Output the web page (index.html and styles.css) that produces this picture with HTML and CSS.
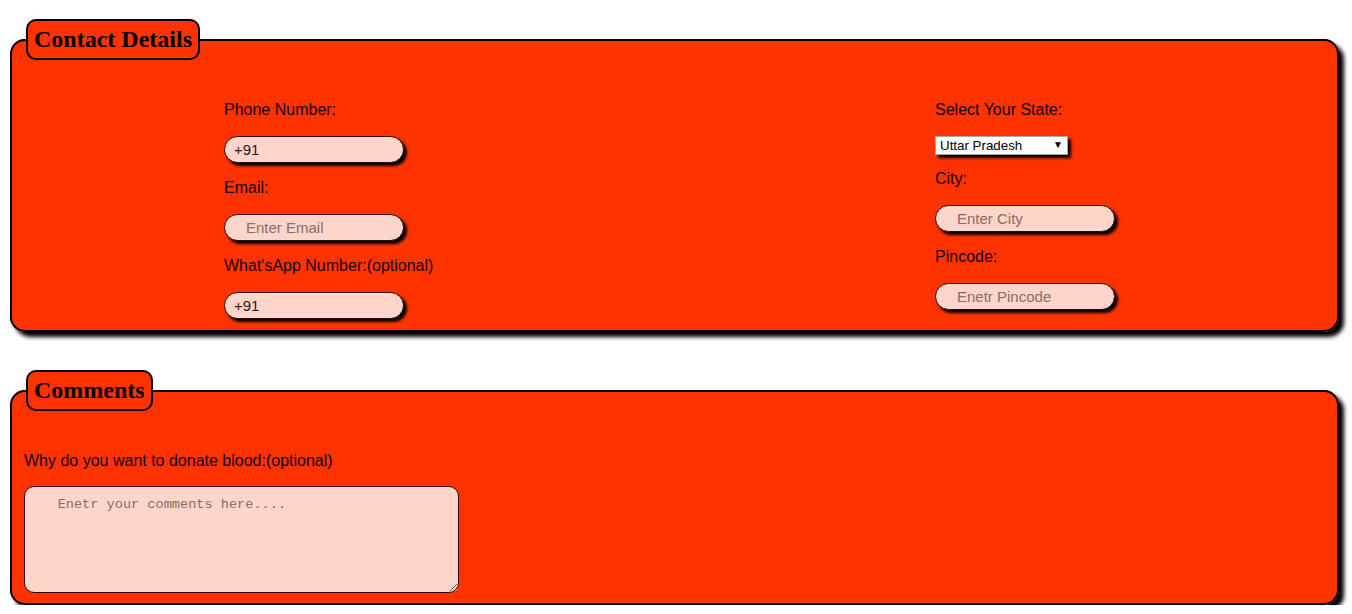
FILE: index.html
```html
<!DOCTYPE html>
<html>
<head>
<meta charset="utf-8">
<link rel="stylesheet" href="styles.css">
</head>
<body>
<form class="form">
  <fieldset class="box box-contact">
    <legend class="box-title">Contact Details</legend>
    <div class="cols">
      <div class="col">
        <label class="lbl">Phone Number:</label>
        <input class="field field-val" type="text" value="+91">
        <label class="lbl">Email:</label>
        <input class="field field-ph" type="text" placeholder="Enter Email">
        <label class="lbl">What'sApp Number:(optional)</label>
        <input class="field field-val" type="text" value="+91">
      </div>
      <div class="col">
        <label class="lbl">Select Your State:</label>
        <span class="select-wrap"><select class="select"><option>Uttar Pradesh</option></select></span>
        <label class="lbl">City:</label>
        <input class="field field-ph" type="text" placeholder="Enter City">
        <label class="lbl">Pincode:</label>
        <input class="field field-ph" type="text" placeholder="Enetr Pincode">
      </div>
    </div>
  </fieldset>
  <fieldset class="box box-comments">
    <legend class="box-title">Comments</legend>
    <div class="comment-body">
      <label class="lbl lbl-comment">Why do you want to donate blood:(optional)</label>
      <textarea class="comments" placeholder="    Enetr your comments here...."></textarea>
    </div>
  </fieldset>
</form>
</body>
</html>
```
FILE: styles.css
```css
html, body {
  margin: 0;
  padding: 0;
  background: #ffffff;
}
body {
  padding: 0 13px 0 10px;
  font-family: "Liberation Sans", Arial, sans-serif;
}
.form {
  display: flex;
  flex-direction: column;
  padding-top: 19px;
}
.box {
  margin: 0;
  padding: 0;
  border: 2px solid #000;
  border-radius: 15px;
  background: #ff3300;
  box-shadow: 5px 5px 4px #000;
  min-width: 0;
}
.box-comments {
  margin-top: 38px;
}
.box-title {
  margin-left: 14px;
  padding: 0 6px;
  border: 2px solid #000;
  border-radius: 10px;
  background: #ff3300;
  font-family: "Liberation Serif", "Times New Roman", serif;
  font-weight: bold;
  font-size: 24px;
  line-height: 37px;
  color: #000;
}
.cols {
  display: grid;
  grid-template-columns: 711px auto;
  padding: 40px 0 11px 212px;
}
.col {
  display: flex;
  flex-direction: column;
  align-items: flex-start;
}
.comment-body {
  display: flex;
  flex-direction: column;
  align-items: flex-start;
  padding: 40px 0 10px 12px;
}
.lbl {
  padding-top: 1px;
  font-size: 16px;
  line-height: 18px;
  color: #140400;
  margin-bottom: 17px;
}
.lbl-comment {
  margin-bottom: 16px;
}
.field {
  box-sizing: border-box;
  width: 180px;
  height: 27px;
  margin: 0 0 15px 0;
  border: 1px solid #2a0c04;
  border-radius: 14px;
  background: #fdd5cb;
  box-shadow: 3px 3px 3px #000;
  font-family: "Liberation Sans", Arial, sans-serif;
  font-size: 15px;
  color: #2a1410;
  outline: none;
}
.col .field:last-child {
  margin-bottom: 0;
}
.field-val {
  padding: 0 0 0 9px;
}
.field-ph {
  padding: 0 0 0 21px;
}
.field::placeholder,
.comments::placeholder {
  color: #8f6a63;
  opacity: 1;
}
.select-wrap {
  position: relative;
  display: inline-block;
  margin-bottom: 14px;
  box-shadow: 3px 3px 3px #000;
}
.select {
  display: block;
  box-sizing: border-box;
  width: 133px;
  height: 19px;
  margin: 0;
  padding: 0 0 0 4px;
  border: 1px solid #a9a9a9;
  border-radius: 0;
  background: #ffffff;
  appearance: none;
  -webkit-appearance: none;
  font-family: "Liberation Sans", Arial, sans-serif;
  font-size: 13.33px;
  color: #000;
  outline: none;
}
.select-wrap::after {
  content: "\25BC";
  position: absolute;
  right: 5px;
  top: 3px;
  font-size: 10px;
  line-height: 12px;
  color: #000;
  pointer-events: none;
}
.comments {
  box-sizing: border-box;
  width: 435px;
  height: 107px;
  margin: 0;
  padding: 10px 2px 2px 0;
  border: 1px solid #2a0c04;
  border-radius: 10px;
  background: #fdd5cb;
  font-family: "Liberation Mono", "DejaVu Sans Mono", monospace;
  font-size: 13.6px;
  color: #2a1410;
  outline: none;
}
```
